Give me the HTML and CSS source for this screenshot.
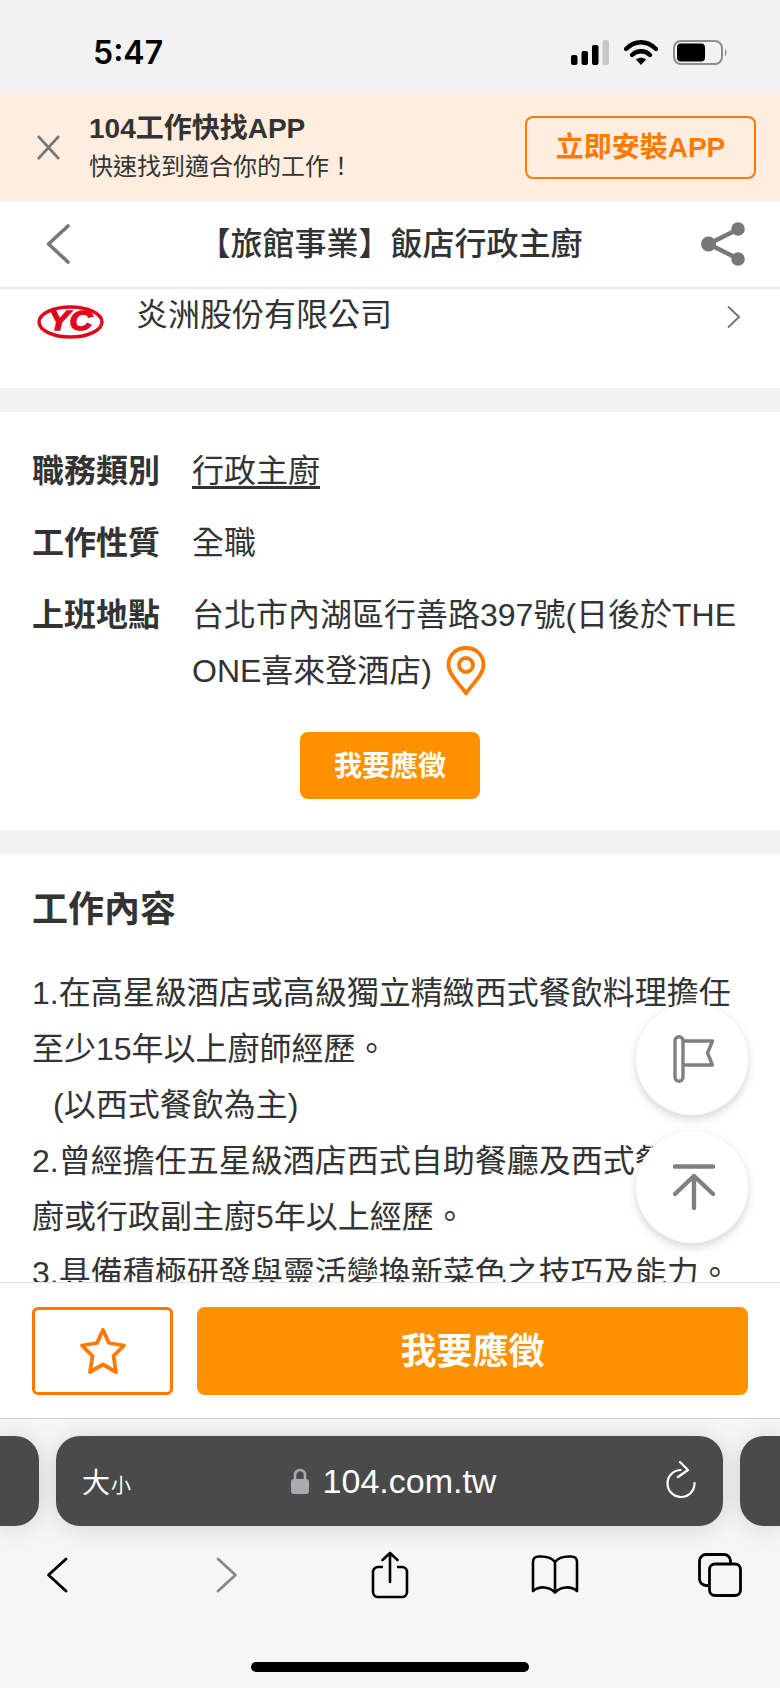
FILE: index.html

```html
<!DOCTYPE html>
<html lang="zh-Hant">
<head>
    <meta charset="UTF-8">
    <meta name="viewport" content="width=device-width, initial-scale=1.0">
    <title>【旅館事業】飯店行政主廚</title>
    <link rel="stylesheet" href="styles.css">
</head>
<body>

<div class="phone">

    <div class="status-bar">
        <span class="clock">5:47</span>
        <div class="status-icons">
            <svg width="38" height="25" viewBox="0 0 38 25">
                <rect x="0" y="15" width="6.5" height="10" rx="2" fill="#000"/>
                <rect x="10.5" y="11" width="6.5" height="14" rx="2" fill="#000"/>
                <rect x="21" y="5" width="6.5" height="20" rx="2" fill="#000"/>
                <rect x="31.5" y="0" width="6.5" height="25" rx="2" fill="#c8c8c8"/>
            </svg>
            <svg width="34" height="25" viewBox="0 0 34 25">
                <path d="M2 9 C11 0 23 0 32 9" fill="none" stroke="#000" stroke-width="4.4" stroke-linecap="round"/>
                <path d="M8 15 C13 10 21 10 26 15" fill="none" stroke="#000" stroke-width="4.4" stroke-linecap="round"/>
                <path d="M12 19.5 C15 17 19 17 22 19.5 L17 25 Z" fill="#000"/>
            </svg>
            <svg width="55" height="25" viewBox="0 0 55 25">
                <rect x="1" y="1" width="48" height="23" rx="7" fill="none" stroke="#8e8e8e" stroke-width="2"/>
                <rect x="4" y="3.5" width="28" height="18" rx="4" fill="#000"/>
                <path d="M52 9 C54 10 54 15 52 16 Z" fill="#8e8e8e"/>
            </svg>
        </div>
    </div>

    <div class="app-banner">
        <svg class="banner-close" width="25" height="25" viewBox="0 0 25 25">
            <path d="M2 1 L23 24 M23 1 L2 24" stroke="#777" stroke-width="2.6" fill="none"/>
        </svg>
        <div class="banner-text">
            <div class="banner-title">104工作快找APP</div>
            <div class="banner-sub">快速找到適合你的工作！</div>
        </div>
        <a class="banner-btn">立即安裝APP</a>
    </div>

    <div class="top-nav">
        <div class="nav-slot nav-slot-left">
            <svg width="24" height="40" viewBox="0 0 24 40">
                <path d="M22 2 L2.5 20 L22 38" fill="none" stroke="#777" stroke-width="3.6" stroke-linecap="round" stroke-linejoin="round"/>
            </svg>
        </div>
        <h1 class="nav-title">【旅館事業】飯店行政主廚</h1>
        <div class="nav-slot nav-slot-right">
            <svg width="44" height="44" viewBox="0 0 44 44">
                <path d="M37.5 7 L7.5 22 L37.5 37" fill="none" stroke="#777" stroke-width="4.5"/>
                <circle cx="7.5" cy="22" r="7.5" fill="#777"/>
                <circle cx="37" cy="7" r="6.8" fill="#777"/>
                <circle cx="37" cy="37" r="6.8" fill="#777"/>
            </svg>
        </div>
    </div>

    <main class="page">
        <section class="company-row">
            <svg class="company-logo" width="67" height="34" viewBox="0 0 67 34">
                <ellipse cx="33.5" cy="17" rx="31.5" ry="15" fill="#fff" stroke="#e2061c" stroke-width="3.4"/>
                <text x="33.5" y="25" text-anchor="middle" textLength="44" lengthAdjust="spacingAndGlyphs" class="logo-text">YC</text>
            </svg>
            <span class="company-name">炎洲股份有限公司</span>
            <svg class="company-arrow" width="15" height="24" viewBox="0 0 15 24">
                <path d="M2 1.5 L13 12 L2 22.5" fill="none" stroke="#777" stroke-width="2"/>
            </svg>
        </section>

        <section class="card info-card">
            <div class="info-row">
                <div class="info-label">職務類別</div>
                <div class="info-value"><a class="info-link">行政主廚</a></div>
            </div>
            <div class="info-row">
                <div class="info-label">工作性質</div>
                <div class="info-value">全職</div>
            </div>
            <div class="info-row">
                <div class="info-label">上班地點</div>
                <div class="info-value">台北市內湖區行善路397號(日後於THE ONE喜來登酒店)<svg class="pin" width="40" height="50" viewBox="0 0 40 50">
                        <path d="M20 47.5 C14 38 2.5 29 2.5 19 C2.5 9 10 2 20 2 C30 2 37.5 9 37.5 19 C37.5 29 26 38 20 47.5 Z" fill="none" stroke="#ff7800" stroke-width="3.8" stroke-linejoin="round"/>
                        <circle cx="20" cy="19" r="7" fill="none" stroke="#ff7800" stroke-width="3.8"/>
                    </svg></div>
            </div>
            <a class="apply-small">我要應徵</a>
        </section>

        <section class="card job-card">
            <h2 class="job-heading">工作內容</h2>
            <div class="job-text">
                1.在高星級酒店或高級獨立精緻西式餐飲料理擔任至少15年以上廚師經歷。<br>
                <span class="job-note">(以西式餐飲為主)</span><br>
                2.曾經擔任五星級酒店西式自助餐廳及西式餐廳主廚或行政副主廚5年以上經歷。<br>
                3.具備積極研發與靈活變換新菜色之技巧及能力。
            </div>
        </section>

        <div class="float-actions">
            <a class="float-btn">
                <svg width="42" height="48" viewBox="0 0 42 48">
                    <rect x="2" y="1.8" width="8" height="44.4" rx="4" fill="none" stroke="#808080" stroke-width="3.4"/>
                    <path d="M10 6 H39.5 L34.5 18 L39.5 30 H10" fill="none" stroke="#808080" stroke-width="3.4" stroke-linejoin="round"/>
                </svg>
            </a>
            <a class="float-btn">
                <svg width="42" height="46" viewBox="0 0 42 46">
                    <path d="M2 2.5 H40" stroke="#808080" stroke-width="4.4" stroke-linecap="round"/>
                    <path d="M2 30 L21 12 L40 30 M21 12 V44" fill="none" stroke="#808080" stroke-width="4.4" stroke-linecap="round" stroke-linejoin="round"/>
                </svg>
            </a>
        </div>
    </main>

    <div class="action-bar">
        <a class="save-btn">
            <svg width="48" height="49" viewBox="0 0 48 49">
                <path d="M24 3 L30 16 L45 18.5 L34.5 29 L37 45 L24 37.5 L11 45 L13.5 29 L3 18.5 L18 16 Z" fill="none" stroke="#ff7800" stroke-width="3.8" stroke-linejoin="round"/>
            </svg>
        </a>
        <a class="apply-btn">我要應徵</a>
    </div>

    <div class="browser-bar">
        <div class="url-row">
            <div class="url-stub"></div>
            <div class="url-pill">
                <div class="text-size"><span class="size-big">大</span><span class="size-small">小</span></div>
                <div class="url-address">
                    <svg width="18" height="26" viewBox="0 0 18 26">
                        <path d="M4 12 V7 a5 5 0 0 1 10 0 V12" fill="none" stroke="#a9a9ae" stroke-width="2.6"/>
                        <rect x="0" y="11" width="18" height="15" rx="3" fill="#a9a9ae"/>
                    </svg>
                    <span>104.com.tw</span>
                </div>
                <svg class="reload" width="32" height="37" viewBox="0 0 32 37">
                    <path d="M15.5 9 A13.5 13.5 0 1 0 29.5 22" fill="none" stroke="#fff" stroke-width="2.2" stroke-linecap="round"/>
                    <path d="M15 1 L23 9 L13 16" fill="none" stroke="#fff" stroke-width="2.2" stroke-linecap="round" stroke-linejoin="round"/>
                </svg>
            </div>
            <div class="url-stub url-stub-right"></div>
        </div>

        <div class="browser-tools">
            <div class="tool">
                <svg width="22" height="36" viewBox="0 0 22 36">
                    <path d="M20 2 L2.5 18 L20 34" fill="none" stroke="#000" stroke-width="2.8" stroke-linecap="round" stroke-linejoin="round"/>
                </svg>
            </div>
            <div class="tool">
                <svg width="22" height="36" viewBox="0 0 22 36">
                    <path d="M2 2 L19.5 18 L2 34" fill="none" stroke="#888" stroke-width="2.8" stroke-linecap="round" stroke-linejoin="round"/>
                </svg>
            </div>
            <div class="tool">
                <svg width="38" height="48" viewBox="0 0 38 48">
                    <path d="M19 2 V31 M11.5 9 L19 2 L26.5 9" fill="none" stroke="#000" stroke-width="2.6" stroke-linecap="round" stroke-linejoin="round"/>
                    <path d="M12 16 H7 a5 5 0 0 0 -5 5 V41 a5 5 0 0 0 5 5 H31 a5 5 0 0 0 5 -5 V21 a5 5 0 0 0 -5 -5 H26" fill="none" stroke="#000" stroke-width="2.6"/>
                </svg>
            </div>
            <div class="tool">
                <svg width="48" height="40" viewBox="0 0 48 40">
                    <path d="M24 7 C21 3 16 1.5 10 1.5 H8 Q2 1.5 2 7 V36 C8 31 18 31 24 37.5 C30 31 40 31 46 36 V7 Q46 1.5 40 1.5 H38 C32 1.5 27 3 24 7 Z M24 7 V37.5" fill="none" stroke="#000" stroke-width="2.6" stroke-linejoin="round"/>
                </svg>
            </div>
            <div class="tool">
                <svg width="44" height="44" viewBox="0 0 44 44">
                    <path d="M10 32.5 H8 a6.5 6.5 0 0 1 -6.5 -6.5 V8 a6.5 6.5 0 0 1 6.5 -6.5 H26 a6.5 6.5 0 0 1 6.5 6.5 V10" fill="none" stroke="#000" stroke-width="2.8"/>
                    <rect x="11.5" y="11" width="31" height="31.5" rx="5.5" fill="none" stroke="#000" stroke-width="2.8"/>
                </svg>
            </div>
        </div>

        <div class="home-indicator"></div>
    </div>

</div>

</body>
</html>
```

FILE: styles.css

```css
* { box-sizing: border-box; }
html, body { margin: 0; padding: 0; }
body { font-family: "Liberation Sans", "Noto Sans CJK TC", sans-serif; color: #333; background: #f2f2f2; }
a { display: block; }
svg { display: block; flex-shrink: 0; }

.phone { width: 780px; height: 1688px; display: flex; flex-direction: column; overflow: hidden; }

/* status bar */
.status-bar { height: 94px; flex-shrink: 0; display: flex; justify-content: space-between; align-items: center; padding: 10px 52px 0 93px; background: #f2f2f2; }
.clock { font-family: Inter, sans-serif; font-size: 32px; font-weight: 600; color: #000; }
.status-icons { display: flex; align-items: center; gap: 15px; }

/* install banner */
.app-banner { height: 107px; flex-shrink: 0; display: flex; align-items: center; padding: 0 24px 0 36px; background: #ffeee0; }
.banner-close { margin-right: 28px; }
.banner-text { flex: 1; }
.banner-title { font-size: 28px; line-height: 36px; font-weight: 700; }
.banner-sub { font-size: 24px; line-height: 36px; margin-top: 2px; }
.banner-btn { width: 231px; height: 63px; line-height: 59px; text-align: center; font-size: 28px; font-weight: 700; color: #ff7800; border: 2px solid #ff7800; border-radius: 8px; }

/* title nav */
.top-nav { height: 88px; flex-shrink: 0; display: flex; justify-content: space-between; align-items: center; padding: 0 35px 0 36px; background: #fff; border-bottom: 2px solid #eee; }
.nav-slot { width: 44px; }
.nav-slot-left { padding-left: 10px; }
.nav-slot-right { display: flex; justify-content: flex-end; }
.nav-title { margin: 0; font-size: 32px; line-height: 44px; font-weight: 500; }

/* page body */
.page { flex: 1; min-height: 0; position: relative; overflow: hidden; background: #f2f2f2; }

.company-row { height: 99px; display: flex; align-items: flex-start; padding: 15px 39px 0 37px; background: #fff; }
.company-logo { margin-top: 1px; }
.logo-text { font-size: 27px; font-weight: 700; font-style: italic; fill: #e2061c; stroke: #e2061c; stroke-width: 1.4; }
.company-name { flex: 1; margin: -17px 0 0 32px; font-size: 32px; line-height: 56px; }
.company-arrow { margin-top: 1px; }

.card { background: #fff; padding: 0 32px; }
.info-card { margin-top: 24px; padding-top: 31px; padding-bottom: 31px; height: 418px; }
.info-row { display: flex; font-size: 32px; line-height: 56px; margin-bottom: 16px; }
.info-label { width: 160px; flex-shrink: 0; font-weight: 700; }
.info-value { flex: 1; }
.info-link { display: inline; text-decoration: underline; text-underline-offset: 4px; }
.pin { display: inline-block; vertical-align: middle; margin: -6px 0 0 14px; }

.apply-small { width: 180px; height: 67px; margin: 33px auto 0; line-height: 69px; text-align: center; font-size: 28px; font-weight: 700; color: #fff; background: #ff9100; border-radius: 8px; }

.job-card { margin-top: 24px; padding-top: 31px; height: 500px; }
.job-heading { margin: 0 0 30px; font-size: 36px; line-height: 50px; font-weight: 700; }
.job-text { font-size: 32px; line-height: 56px; }
.job-note { margin-left: 21px; }

.float-actions { position: absolute; right: 32px; bottom: 39px; display: flex; flex-direction: column; gap: 16px; }
.float-btn { width: 112px; height: 112px; display: flex; justify-content: center; align-items: center; padding-left: 3px; background: #fff; border-radius: 50%; box-shadow: 0 4px 10px rgba(0, 0, 0, .16); }

/* sticky action bar */
.action-bar { height: 137px; flex-shrink: 0; display: flex; gap: 24px; padding: 24px 32px 0; background: #fff; border-top: 1px solid #e3e3e3; border-bottom: 1px solid #cfcfcf; }
.save-btn { width: 141px; height: 88px; display: flex; justify-content: center; align-items: center; border: 3px solid #ff7800; border-radius: 6px; }
.apply-btn { flex: 1; height: 88px; line-height: 90px; text-align: center; font-size: 36px; font-weight: 700; color: #fff; background: #ff9100; border-radius: 8px; }

/* safari bottom bar */
.browser-bar { height: 269px; flex-shrink: 0; padding-top: 17px; background: #f6f6f6; }
.url-row { display: flex; gap: 17px; height: 90px; }
.url-stub { width: 39px; background: #4a4a4a; border-radius: 0 24px 24px 0; box-shadow: 0 2px 24px rgba(0, 0, 0, .14); }
.url-stub-right { width: 40px; border-radius: 24px 0 0 24px; }
.url-pill { width: 668px; display: grid; grid-template-columns: 1fr auto 1fr; align-items: center; padding: 0 26px; color: #fff; background: #4a4a4a; border-radius: 24px; box-shadow: 0 2px 24px rgba(0, 0, 0, .14); }
.text-size { display: flex; align-items: baseline; }
.size-big { font-size: 28px; }
.size-small { font-size: 20px; margin-left: 1px; }
.url-address { display: flex; align-items: center; gap: 14px; margin-left: 8px; font-size: 34px; }
.reload { justify-self: end; margin-top: -4px; }

.browser-tools { display: grid; grid-template-columns: 170px 163px 165px 165px 44px; height: 98px; padding-left: 35px; align-items: center; }
.tool { width: 44px; display: flex; justify-content: center; }

.home-indicator { width: 278px; height: 10px; margin: 38px auto 0; background: #000; border-radius: 5px; }
```
